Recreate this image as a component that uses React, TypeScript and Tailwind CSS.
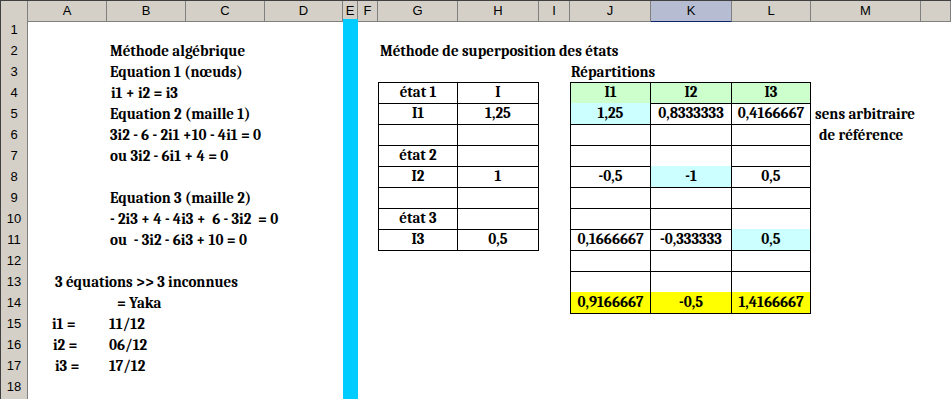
import React from "react";

type Cell = { t?: string; c?: string };
type Row = Record<string, Cell>;

const LETTERS = ["A", "B", "C", "D", "E", "F", "G", "H", "I", "J", "K", "L", "M", "N"];

const GRID =
  "grid grid-cols-[28px_79px_79px_79px_78px_15px_20px_80px_81px_31px_81px_81px_79px_110px_30px]";

// bordered table cells
const tb = "border-r border-b border-black justify-center";
const green = "bg-[#ccffcc]";
const cyan = "bg-[#ccffff]";
const yellow = "bg-[#ffff00]";

const rows: Row[] = [
  {},
  { B: { t: "Méthode algébrique", c: "pl-[3px]" }, G: { t: "Méthode de superposition des états", c: "pl-[2px]" } },
  { B: { t: "Equation 1 (nœuds)", c: "pl-[3px]" }, J: { t: "Répartitions", c: "pl-[1px]" } },
  {
    B: { t: "i1 + i2 = i3", c: "pl-[4px]" },
    G: { t: "état 1", c: `${tb} border-l border-t` },
    H: { t: "I", c: `${tb} border-t` },
    J: { t: "I1", c: `${tb} border-l border-t ${green}` },
    K: { t: "I2", c: `${tb} border-t ${green}` },
    L: { t: "I3", c: `${tb} border-t ${green}` },
  },
  {
    B: { t: "Equation 2 (maille 1)", c: "pl-[3px]" },
    G: { t: "I1", c: `${tb} border-l` },
    H: { t: "1,25", c: tb },
    J: { t: "1,25", c: `${tb} border-l ${cyan}` },
    K: { t: "0,8333333", c: tb },
    L: { t: "0,4166667", c: tb },
    M: { t: "sens arbitraire", c: "pl-[4px]" },
  },
  {
    B: { t: "3i2 - 6 - 2i1 +10 - 4i1 = 0", c: "pl-[3px]" },
    G: { c: `${tb} border-l` },
    H: { c: tb },
    J: { c: `${tb} border-l` },
    K: { c: tb },
    L: { c: tb },
    M: { t: "de référence", c: "pl-[8px]" },
  },
  {
    B: { t: "ou 3i2 - 6i1 + 4 = 0", c: "pl-[3px]" },
    G: { t: "état 2", c: `${tb} border-l` },
    H: { c: tb },
    J: { c: `${tb} border-l` },
    K: { c: tb },
    L: { c: tb },
  },
  {
    G: { t: "I2", c: `${tb} border-l` },
    H: { t: "1", c: tb },
    J: { t: "-0,5", c: `${tb} border-l` },
    K: { t: "-1", c: `${tb} ${cyan}` },
    L: { t: "0,5", c: tb },
  },
  {
    B: { t: "Equation 3 (maille 2)", c: "pl-[3px]" },
    G: { c: `${tb} border-l` },
    H: { c: tb },
    J: { c: `${tb} border-l` },
    K: { c: tb },
    L: { c: tb },
  },
  {
    B: { t: "- 2i3 + 4 - 4i3 +  6 - 3i2  = 0", c: "pl-[3px]" },
    G: { t: "état 3", c: `${tb} border-l` },
    H: { c: tb },
    J: { c: `${tb} border-l` },
    K: { c: tb },
    L: { c: tb },
  },
  {
    B: { t: "ou  - 3i2 - 6i3 + 10 = 0", c: "pl-[3px]" },
    G: { t: "I3", c: `${tb} border-l` },
    H: { t: "0,5", c: tb },
    J: { t: "0,1666667", c: `${tb} border-l` },
    K: { t: "-0,333333", c: tb },
    L: { t: "0,5", c: `${tb} ${cyan}` },
  },
  {
    J: { c: `${tb} border-l` },
    K: { c: tb },
    L: { c: tb },
  },
  {
    A: { t: "3 équations >> 3 inconnues", c: "pl-[27px]" },
    J: { c: `${tb} border-l` },
    K: { c: tb },
    L: { c: tb },
  },
  {
    A: { t: "= Yaka", c: "pl-[89px]" },
    J: { t: "0,9166667", c: `${tb} border-l ${yellow}` },
    K: { t: "-0,5", c: `${tb} ${yellow}` },
    L: { t: "1,4166667", c: `${tb} ${yellow}` },
  },
  { A: { t: "i1 =", c: "pl-[24px]" }, B: { t: "11/12", c: "pl-[2px]" } },
  { A: { t: "i2 =", c: "pl-[25px]" }, B: { t: "06/12", c: "pl-[2px]" } },
  { A: { t: "i3 =", c: "pl-[27px]" }, B: { t: "17/12", c: "pl-[2px]" } },
  {},
  {},
];

function HeaderRow() {
  return (
    <div className={`${GRID} h-[19px] border-t border-[#404040]`}>
      <div className="border-l border-r border-b border-l-[#404040] border-r-[#808080] border-b-[#808080] bg-[#d4d0c8]" />
      {LETTERS.map((l) => (
        <div
          key={l}
          className={`flex items-center justify-center border-r border-b font-['Liberation_Sans'] text-[13px] font-normal ${
            l === "K" ? "border-r-[#808080] border-b-[#0a246a] bg-[#b6bdd2]" : "border-[#808080] bg-[#d4d0c8]"
          }`}
        >
          {l === "N" ? "" : l}
        </div>
      ))}
    </div>
  );
}

export default function App() {
  return (
    <div className="h-[399px] w-[951px] overflow-hidden bg-white font-serif text-black">
      <HeaderRow />
      {rows.map((row, i) => (
        <div key={i} className={`${GRID} h-[21px]`}>
          <div className="flex items-center justify-center border-l border-r border-b border-l-[#404040] border-r-[#808080] border-b-[#808080] bg-[#d4d0c8] pt-[1px] font-['Liberation_Sans'] text-[13px] font-normal">
            {i < 18 ? i + 1 : ""}
          </div>
          {LETTERS.map((l) => {
            const cell = row[l];
            return (
              <div
                key={l}
                className={`flex items-end whitespace-pre pb-[3px] font-serif text-[15px] leading-[15px] font-bold ${
                  l === "E" ? "bg-[#00ccff]" : ""
                } ${cell?.c ?? ""}`}
              >
                {cell?.t ?? ""}
              </div>
            );
          })}
        </div>
      ))}
    </div>
  );
}
